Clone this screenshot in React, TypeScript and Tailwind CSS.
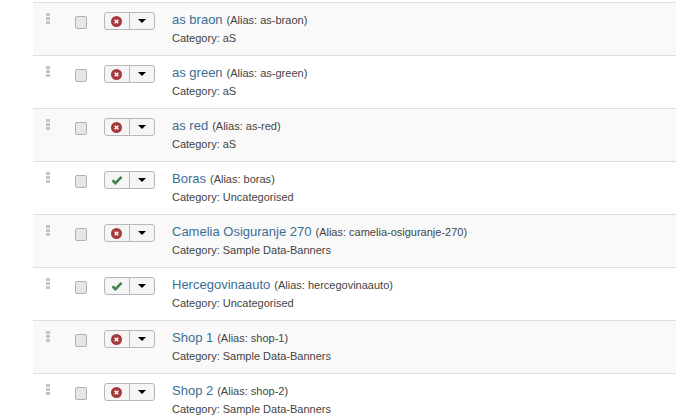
const rows = [
  { title: 'as braon', alias: 'as-braon', category: 'aS', on: false },
  { title: 'as green', alias: 'as-green', category: 'aS', on: false },
  { title: 'as red', alias: 'as-red', category: 'aS', on: false },
  { title: 'Boras', alias: 'boras', category: 'Uncategorised', on: true },
  { title: 'Camelia Osiguranje 270', alias: 'camelia-osiguranje-270', category: 'Sample Data-Banners', on: false },
  { title: 'Hercegovinaauto', alias: 'hercegovinaauto', category: 'Uncategorised', on: true },
  { title: 'Shop 1', alias: 'shop-1', category: 'Sample Data-Banners', on: false },
  { title: 'Shop 2', alias: 'shop-2', category: 'Sample Data-Banners', on: false },
]

function Handle() {
  return (
    <div className="flex flex-col gap-[1px] w-[4px]">
      <div className="h-[3px] bg-[#c4c4c4]" />
      <div className="h-[3px] bg-[#c4c4c4]" />
      <div className="h-[3px] bg-[#c4c4c4]" />
    </div>
  )
}

function StatusIcon({ on }: { on: boolean }) {
  if (on) {
    return (
      <svg width="12" height="10" viewBox="0 0 13 11">
        <path d="M1.5 5.8 L4.8 9 L11.5 2" fill="none" stroke="#47814f" strokeWidth="2.8" />
      </svg>
    )
  }
  return (
    <svg width="11" height="11" viewBox="0 0 12 12">
      <circle cx="6" cy="6" r="6" fill="#a5393b" />
      <path d="M4 4 L8 8 M8 4 L4 8" stroke="#ffffff" strokeWidth="1.6" />
    </svg>
  )
}

export default function App() {
  return (
    <div className="w-[676px] h-[420px] overflow-hidden bg-white pt-[2px] pl-[33px] font-['Liberation_Sans',Arial,sans-serif] text-[#444444]">
      {rows.map((row, i) => (
        <div
          key={row.alias}
          className={`h-[53px] flex border-t border-[#dddddd] ${i % 2 === 0 ? 'bg-[#f9f9f9]' : 'bg-white'}`}
        >
          <div className="w-[42px] pl-[13px] pt-[10px]">
            <Handle />
          </div>
          <div className="w-[29px] pt-[13px]">
            <div className="w-[12px] h-[13px] rounded-[2px] border border-[#b0b0b0] bg-[#e6e6e6]" />
          </div>
          <div className="w-[68px] pt-[9px]">
            <div className="flex w-[51px] h-[18px] rounded-[3px] border border-[#b8b8b8] bg-[#f5f5f5]">
              <div className="w-[25px] pr-[1px] flex items-center justify-center border-r border-[#b8b8b8]">
                <StatusIcon on={row.on} />
              </div>
              <div className="flex-1 flex items-center justify-center">
                <div className="w-0 h-0 border-x-[4px] border-x-transparent border-t-[4px] border-t-[#000000]" />
              </div>
            </div>
          </div>
          <div className="pt-[7px]">
            <div className="h-[18px] leading-[18px] whitespace-nowrap">
              <a className="text-[13px] text-[#3b6e94]">{row.title}</a>
              <span className="text-[11px] ml-[4px]">(Alias: {row.alias})</span>
            </div>
            <div className="mt-[2px] text-[11px] leading-[16px] whitespace-nowrap">Category: {row.category}</div>
          </div>
        </div>
      ))}
    </div>
  )
}
